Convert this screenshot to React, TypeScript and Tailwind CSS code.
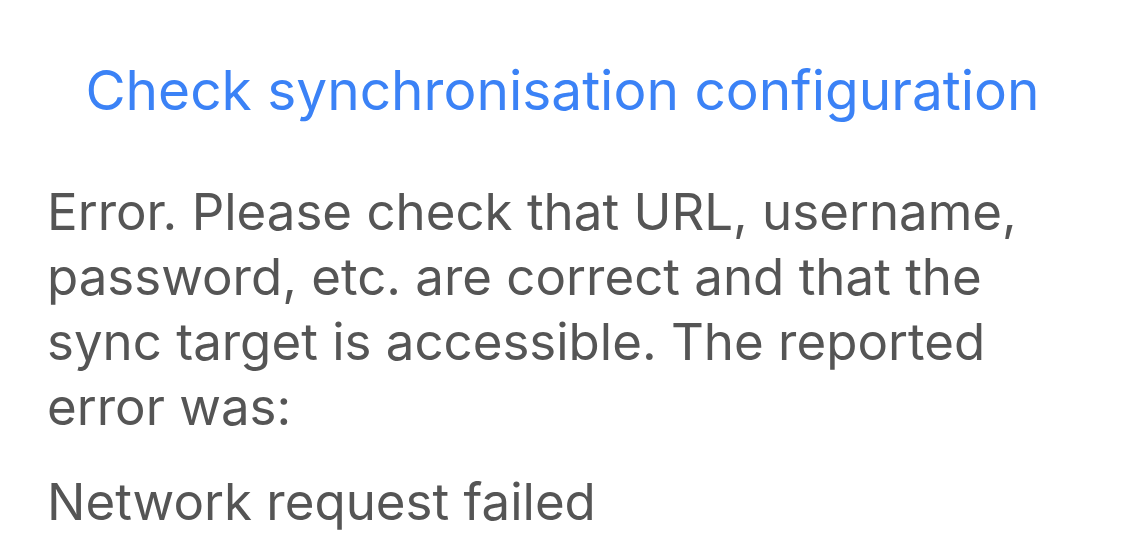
export default function App() {
  return (
    <div
      className="w-[1125px] h-[545px] bg-white overflow-hidden"
      style={{ fontFamily: "Inter, 'Noto Sans', sans-serif" }}
    >
      <div className="pt-[54px] text-center text-[#3b82f6] text-[55px] leading-[72px]">
        Check synchronisation configuration
      </div>
      <div className="px-[47px] pt-[53px] text-[#555555] text-[51px] leading-[65px]">
        <p>
          Error. Please check that URL, username, password, etc. are correct
          and that the sync target is accessible. The reported error was:
        </p>
        <p className="mt-[30px]">Network request failed</p>
      </div>
    </div>
  );
}
